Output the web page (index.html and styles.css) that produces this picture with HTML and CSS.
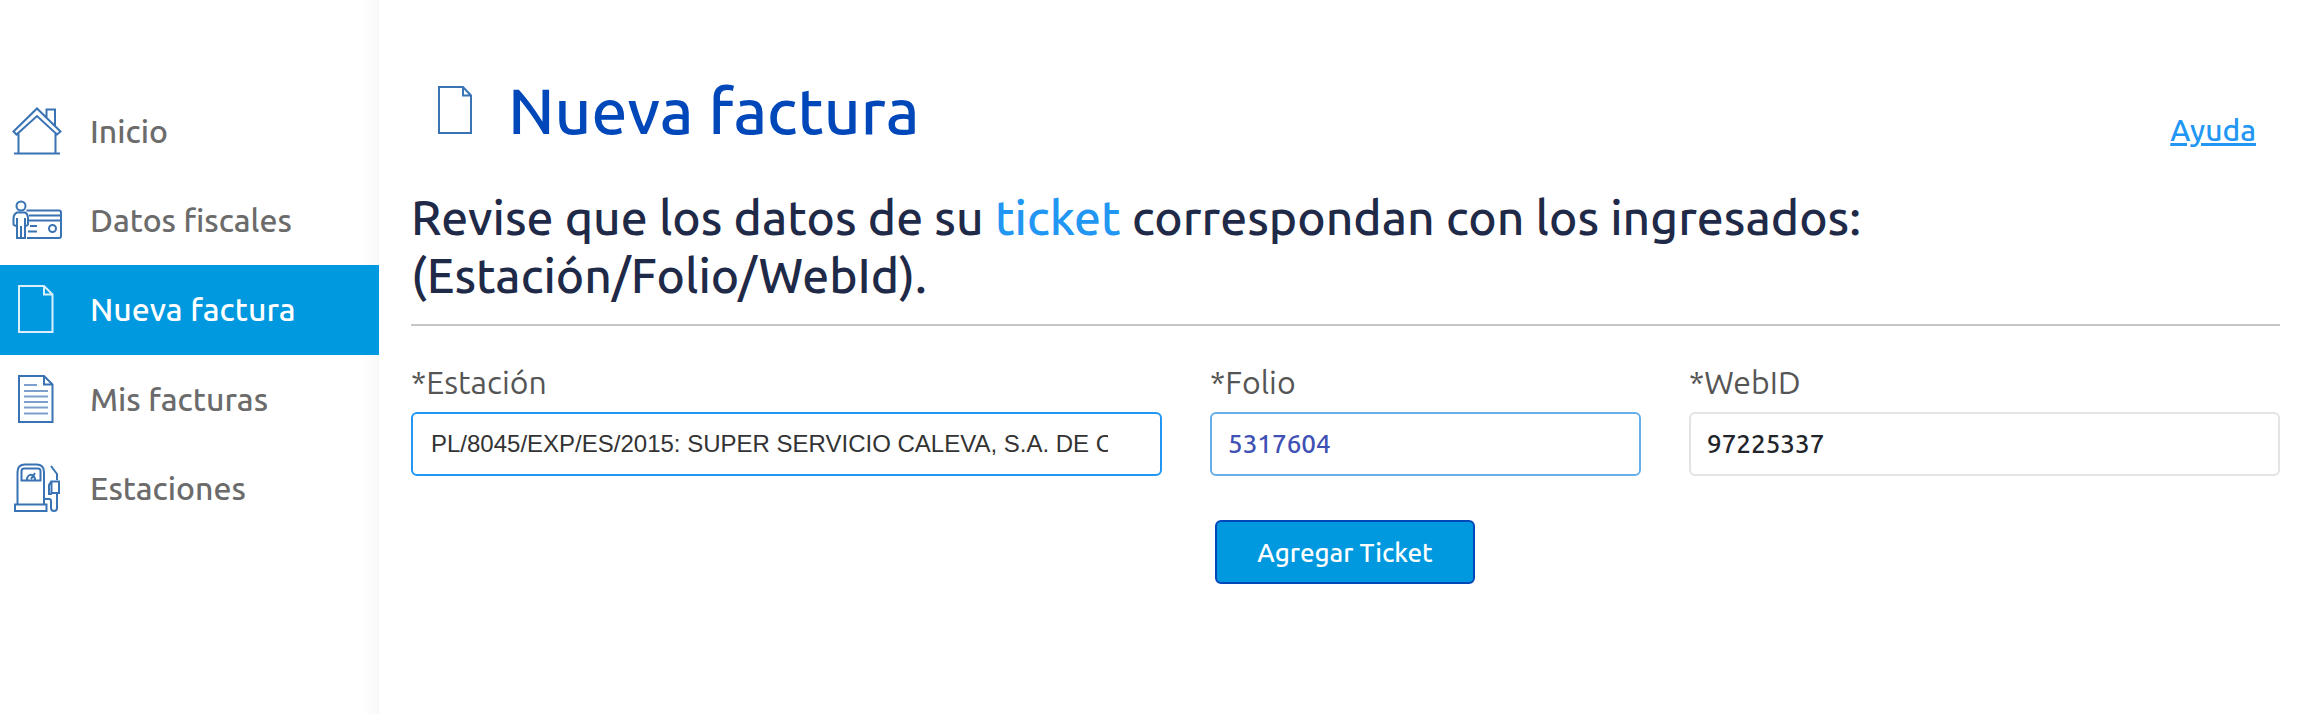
FILE: index.html
```html
<!DOCTYPE html>
<html lang="es">
<head>
    <meta charset="UTF-8">
    <meta name="viewport" content="width=device-width, initial-scale=1.0">
    <title>Nueva factura</title>
    <link rel="stylesheet" href="styles.css">
</head>
<body>
    <nav class="sidebar">
        <a href="#" class="item">
            <svg class="icon" width="50" height="48" viewBox="0 0 50 48">
                <path d="M1.500 24.500 25 1.500l23.500 23-3.500 3L25 9 4.500 27.500zM6.500 26.500V46M43.500 26.500V46M2 46.500h46M34.500 10V2.500h8.500v17"/>
            </svg>
            Inicio
        </a>
        <a href="#" class="item">
            <svg class="icon" width="50" height="40" viewBox="0 0 50 40">
                <circle cx="9" cy="6" r="4.500"/>
                <path d="M5 12.500h8c2 1 3 3 3 6v6c-.5 1.500-2.500 1.500-3 0v13.500H5V24.500c-.5 1.500-3 1.500-3.500 0v-6c0-3 1.500-5 3.500-6zM9 26v12M5 18v7M13 18v7M14.500 10.500H47q2 0 2 2V36q0 2-2 2H15M17 15.500h32M17 20.500h32M18 26h7M16 31.500h9"/>
                <circle cx="40.500" cy="28.500" r="3.500"/>
            </svg>
            Datos fiscales
        </a>
        <a href="#" class="item active">
            <svg class="icon" width="50" height="48" viewBox="0 0 50 48">
                <path d="M7 1h25l8.500 8.500V47H7zM32 1v8.500h8.500"/>
            </svg>
            Nueva factura
        </a>
        <a href="#" class="item">
            <svg class="icon" width="50" height="48" viewBox="0 0 50 48">
                <path d="M7 1h25l8.500 8.500V47H7zM32 1v8.500h8.500"/>
                <path class="soft" d="M12 10h13M12 16h24M12 21.500h24M12 27h24M12 32.500h24M12 38.500h24"/>
            </svg>
            Mis facturas
        </a>
        <a href="#" class="item">
            <svg class="icon" width="50" height="50" viewBox="0 0 50 50">
                <path d="M5.500 41V9q0-7.500 7.500-7.500h11.500Q32 1.500 32 9v32M3 41.500h31.500V48H3zM9.500 17.500V8q0-2.500 2.500-2.500h14Q28.500 5.500 28.500 8v9.500zM15 17c0-7 8-7 8 0M19 16l4-6M39 3l6 8v6M39.500 18.500H47V30h-7.500zM39.500 18l-2.500 4v9h3M32 36h5q2 0 2 2v7q0 3 3 3t3-3V31"/>
            </svg>
            Estaciones
        </a>
    </nav>

    <main class="content">
        <header class="top">
            <svg class="icon" width="34" height="48" viewBox="0 0 34 48">
                <path d="M1 1h24l8 8.500V47H1zM25 1v8.500h8"/>
            </svg>
            <h1>Nueva factura</h1>
            <a href="#" class="help">Ayuda</a>
        </header>

        <h2>Revise que los datos de su <span>ticket</span> correspondan con los ingresados:<br>(Estación/Folio/WebId).</h2>

        <form class="ticket">
            <div class="field">
                <label for="estacion">*Estación</label>
                <input type="text" id="estacion" value="PL/8045/EXP/ES/2015: SUPER SERVICIO CALEVA, S.A. DE C.V.">
            </div>
            <div class="field">
                <label for="folio">*Folio</label>
                <input type="text" id="folio" value="5317604">
            </div>
            <div class="field">
                <label for="webid">*WebID</label>
                <input type="text" id="webid" value="97225337">
            </div>
            <button type="button">Agregar Ticket</button>
        </form>
    </main>
</body>
</html>
```
FILE: styles.css
```css
*{
    margin: 0;
    padding: 0;
    box-sizing: border-box;
}
body{
    display: flex;
    min-height: 100vh;
    font-family: "Ubuntu", "Noto Sans", sans-serif;
    font-weight: 500;
    background-color: #fff;
}
.sidebar{
    width: 379px;
    flex-shrink: 0;
    padding-top: 87px;
    background: linear-gradient(to left, #f8f8f8, #fff 16px);
}
.item{
    display: flex;
    align-items: center;
    gap: 28px;
    height: 89px;
    padding: 0 0 2px 12px;
    font-size: 32px;
    color: #6b6b6b;
    text-decoration: none;
}
.active{
    height: 90px;
    background-color: #0099e0;
    color: #fff;
}
.icon{
    fill: none;
    stroke: #3a73b4;
    stroke-width: 2;
}
.active .icon{
    stroke: #d9f0fb;
}
.soft{
    stroke: #7d9fcb;
}
.content{
    flex: 1;
    padding: 66px 28px 0 32px;
}
.top{
    display: flex;
    align-items: center;
    height: 88px;
    padding: 0 24px 0 27px;
}
h1{
    margin-left: 36px;
    font-size: 64px;
    font-weight: 500;
    line-height: 88px;
    color: #0047ba;
}
.help{
    margin: 40px 0 0 auto;
    font-size: 30px;
    color: #2196f3;
}
h2{
    padding: 34px 0 20px;
    font-size: 48px;
    font-weight: 500;
    line-height: 58px;
    color: #1f2a48;
    border-bottom: 2px solid #c6c6c6;
}
h2 span{
    color: #2196f3;
}
.ticket{
    display: grid;
    grid-template-columns: 751fr 431fr 591fr;
    gap: 44px 48px;
    padding-top: 36px;
}
.field{
    display: flex;
    flex-direction: column;
    gap: 10px;
}
label{
    font-size: 32px;
    font-weight: 400;
    line-height: 40px;
    color: #555;
}
input{
    width: 100%;
    height: 64px;
    padding: 0 16px 2px;
    border: 2px solid #e4e4e4;
    border-radius: 6px;
    font-family: inherit;
    font-size: 26px;
    font-weight: 500;
    color: #212529;
}
#estacion{
    padding: 0 52px 0 18px;
    border-color: #2196f3;
    font-family: "Liberation Sans", sans-serif;
    font-size: 24px;
    font-weight: 400;
    color: #333;
}
#folio{
    border-color: #66afe9;
    color: #3f51b5;
}
button{
    grid-column: 2;
    justify-self: start;
    width: 260px;
    height: 64px;
    margin-left: 5px;
    border: 2px solid #0047ba;
    border-radius: 6px;
    background-color: #0099e0;
    color: #fff;
    font-family: inherit;
    font-size: 26px;
    font-weight: 500;
}
```
